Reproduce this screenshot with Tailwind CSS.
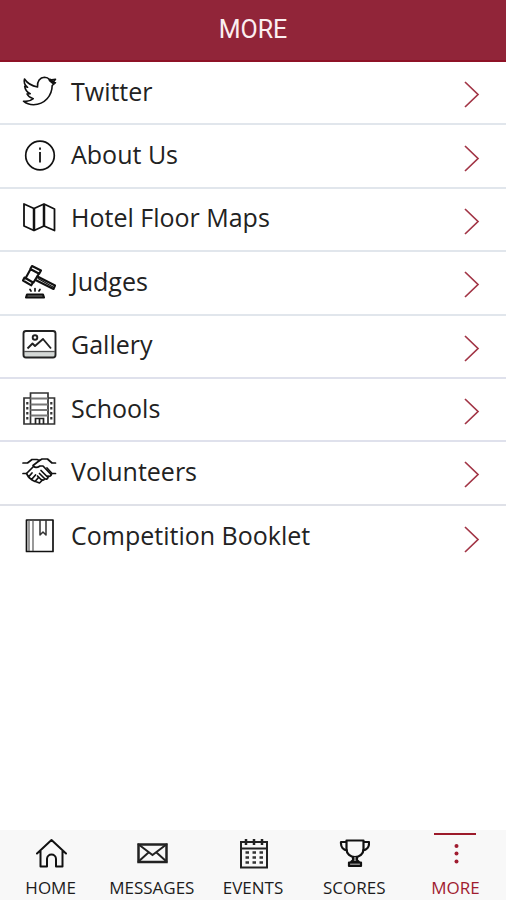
<!DOCTYPE html>
<html lang="en">
<head>
    <meta charset="UTF-8">
    <meta name="viewport" content="width=device-width, initial-scale=1.0">
    <script src="https://cdn.jsdelivr.net/npm/@tailwindcss/browser@4"></script>
    <title>More</title>
</head>
<body class="bg-white font-['Open_Sans',sans-serif] text-[#222]">

    <div class="flex min-h-screen flex-col">
        <!-- Header -->
        <header class="flex h-[62px] items-center justify-center border-b-2 border-[#8e1226] bg-[#912539]">
            <h1 class="font-['Roboto',sans-serif] text-[25px] leading-8 text-[#fbeef0]">MORE</h1>
        </header>

        <!-- Menu List -->
        <main class="flex-1">
            <ul class="grid min-h-[507px] auto-rows-fr">
                <li class="border-b-2 border-[#e1e6ec]">
                    <a href="#twitter" class="flex h-full items-center pl-[21px] pr-[26px]">
                        <svg class="mb-1 size-9 shrink-0" viewBox="0 0 36 36" fill="none" stroke="#111" stroke-width="1.6" stroke-linejoin="round" stroke-linecap="round">
                            <path d="M3.5 6c3 4.500 7.500 7 13 8C16 8 19 4.500 23.500 4.300c2.500 0 4 1 5.500 2.700l5.500-.8-2.500 3.300 2.500.2-3.300 2.800C31 22.500 24 31.500 12.500 31.800c-4 0-7-1-10-3.600 4.500.8 7-.2 9.800-2.500-3.300-.8-5-2.200-6.300-4.700l3.200-.2c-3.200-1.600-5-3.700-5.500-7.500l2.900 1C3.500 12 2.500 9.500 3.500 6z"/>
                            <path d="M29 7l3 2.500" stroke-width="3"/>
                        </svg>
                        <span class="mb-1 ml-[14px] flex-1 text-[25px] leading-8">Twitter</span>
                        <svg class="mt-1 h-[27px] w-4" viewBox="0 0 16 27" fill="none" stroke="#a23546" stroke-width="1.7"><path d="M1 1l13 12.500L1 26"/></svg>
                    </a>
                </li>
                <li class="border-b-2 border-[#e1e6ec]">
                    <a href="#about" class="flex h-full items-center pl-[21px] pr-[26px]">
                        <svg class="mb-1 size-9 shrink-0" viewBox="0 0 36 36" fill="none" stroke="#111" stroke-width="1.7">
                            <circle cx="19" cy="19.5" r="14.3"/>
                            <path d="M19 16v10.500M19 11.500v2.200" stroke-width="1.8"/>
                        </svg>
                        <span class="mb-1 ml-[14px] flex-1 text-[25px] leading-8">About Us</span>
                        <svg class="mt-1 h-[27px] w-4" viewBox="0 0 16 27" fill="none" stroke="#a23546" stroke-width="1.7"><path d="M1 1l13 12.500L1 26"/></svg>
                    </a>
                </li>
                <li class="border-b-2 border-[#e1e6ec]">
                    <a href="#maps" class="flex h-full items-center pl-[21px] pr-[26px]">
                        <svg class="mb-1 size-9 shrink-0" viewBox="0 0 36 36" fill="none" stroke="#111" stroke-width="1.8" stroke-linejoin="round">
                            <path d="M3 5l10 4.500L23 5l10.500 5v21.500L23 27l-10 4.500L3 27z"/>
                            <path d="M13 9.500v22M23 5v22" stroke-width="2.5"/>
                        </svg>
                        <span class="mb-1 ml-[14px] flex-1 text-[25px] leading-8">Hotel Floor Maps</span>
                        <svg class="mt-1 h-[27px] w-4" viewBox="0 0 16 27" fill="none" stroke="#a23546" stroke-width="1.7"><path d="M1 1l13 12.500L1 26"/></svg>
                    </a>
                </li>
                <li class="border-b-2 border-[#e1e6ec]">
                    <a href="#judges" class="flex h-full items-center pl-[21px] pr-[26px]">
                        <svg class="mb-1 size-9 shrink-0" viewBox="0 0 36 36" fill="none" stroke="#111" stroke-width="2.1" stroke-linejoin="round" stroke-linecap="round">
                            <path d="M11 3l9 4.500-1.800 3.200L9.300 6zM3.500 14.500l8.500 5-1.700 2.800L2 17.500zM9.500 6.200L4.700 15M18 10.500L12.500 19.500"/>
                            <path d="M16.500 13.500L34 22.500l-1.500 3.500L14.500 17"/>
                            <path d="M17 15.500l15 8.500" stroke-width="1.2"/>
                            <path d="M6 31.500h16l1 3H5z" fill="#777"/>
                            <path d="M9 26.500l1 1.500M14 25.500V28M19 26.500L18 28" stroke-width="1.7"/>
                        </svg>
                        <span class="mb-1 ml-[14px] flex-1 text-[25px] leading-8">Judges</span>
                        <svg class="mt-1 h-[27px] w-4" viewBox="0 0 16 27" fill="none" stroke="#a23546" stroke-width="1.7"><path d="M1 1l13 12.500L1 26"/></svg>
                    </a>
                </li>
                <li class="border-b-2 border-[#dfe1ec]">
                    <a href="#gallery" class="flex h-full items-center pl-[21px] pr-[26px]">
                        <svg class="mb-1 size-9 shrink-0" viewBox="0 0 36 36" fill="none" stroke="#222" stroke-width="1.9" stroke-linejoin="round">
                            <path d="M3 25.500h31v6H3z" fill="#d4d8d6" stroke="none"/>
                            <rect x="2.5" y="5" width="32" height="26.5" rx="2.5"/>
                            <path d="M3 25.500h31" stroke="#555" stroke-width="1.3"/>
                            <circle cx="14" cy="11.5" r="2.3"/>
                            <path d="M6.500 22.500l5-5 2.500 2.500 8-7 8 9.500"/>
                        </svg>
                        <span class="mb-1 ml-[14px] flex-1 text-[25px] leading-8">Gallery</span>
                        <svg class="mt-1 h-[27px] w-4" viewBox="0 0 16 27" fill="none" stroke="#a23546" stroke-width="1.7"><path d="M1 1l13 12.500L1 26"/></svg>
                    </a>
                </li>
                <li class="border-b-2 border-[#dfe1ec]">
                    <a href="#schools" class="flex h-full items-center pl-[21px] pr-[26px]">
                        <svg class="mb-1 size-9 shrink-0" viewBox="0 0 36 36" fill="none" stroke="#333" stroke-width="1.7">
                            <path d="M9.500 8H3v26h30.500V8H27"/>
                            <path d="M9.500 34V3h17.500v31"/>
                            <path d="M9.500 8.500H27M9.500 14.500H27M9.500 20H27M9.500 25.500H27" stroke="#777" stroke-width="2"/>
                            <path d="M6.300 12v18M30.300 12v18" stroke-width="2.2" stroke-dasharray="2.5 2.5"/>
                            <path d="M14.500 34v-5.500h8V34M18.500 29v5" stroke="#222"/>
                        </svg>
                        <span class="mb-1 ml-[14px] flex-1 text-[25px] leading-8">Schools</span>
                        <svg class="mt-1 h-[27px] w-4" viewBox="0 0 16 27" fill="none" stroke="#a23546" stroke-width="1.7"><path d="M1 1l13 12.500L1 26"/></svg>
                    </a>
                </li>
                <li class="border-b-2 border-[#dfe1e8]">
                    <a href="#volunteers" class="flex h-full items-center pl-[21px] pr-[26px]">
                        <svg class="mb-1 size-9 shrink-0" viewBox="0 0 36 36" fill="none" stroke="#111" stroke-width="1.7" stroke-linejoin="round" stroke-linecap="round">
                            <path d="M2 10h4.500l4.500-3.500h5l2.500 1 2.500-1.500h5.500L31 10h3.500"/>
                            <path d="M18.500 7.500L12 12.500c1.500 2.500 4 2.500 7 .5h3l8 8.500"/>
                            <path d="M2 20.500h3.500L12 14M34.500 20.500H31L26 15"/>
                            <path d="M5.500 20.500l2 3.500 3.500-4M8 24.500l2.500 2 4-4.500M11 27l3 1.500 3.500-4M14.500 28.500l4 1.500 3-3"/>
                            <path d="M20 17.500l7 7c-.5 2-2 2-3.500 1l-5-5M23.500 26c-.7 1.600-2.200 1.500-3.500.5l-3.500-3.500M30.500 21c-.3 2-1.800 2.800-3.500 2"/>
                        </svg>
                        <span class="mb-1 ml-[14px] flex-1 text-[25px] leading-8">Volunteers</span>
                        <svg class="mt-1 h-[27px] w-4" viewBox="0 0 16 27" fill="none" stroke="#a23546" stroke-width="1.7"><path d="M1 1l13 12.500L1 26"/></svg>
                    </a>
                </li>
                <li>
                    <a href="#booklet" class="flex h-full items-center pl-[21px] pr-[26px]">
                        <svg class="mb-1 size-9 shrink-0" viewBox="0 0 36 36" fill="none" stroke="#111" stroke-width="1.7" stroke-linejoin="round">
                            <rect x="5.500" y="3" width="26.5" height="31.5"/>
                            <path d="M8 3v31M12 3v31" stroke="#555" stroke-width="1.2"/>
                            <path d="M19 3v15l3-3 3 3V3" stroke="#333" stroke-width="1.5"/>
                        </svg>
                        <span class="mb-1 ml-[14px] flex-1 text-[25px] leading-8">Competition Booklet</span>
                        <svg class="mt-1 h-[27px] w-4" viewBox="0 0 16 27" fill="none" stroke="#a23546" stroke-width="1.7"><path d="M1 1l13 12.500L1 26"/></svg>
                    </a>
                </li>
            </ul>
        </main>

        <!-- Bottom Navigation -->
        <nav class="grid h-[70px] grid-cols-5 bg-[#f8f8f8] text-[17px] leading-5 text-[#1c1c1c]">
            <a href="#home" class="flex flex-col items-center pt-2">
                <svg class="size-8" viewBox="0 0 32 32" fill="none" stroke="#111" stroke-width="2" stroke-linejoin="round" stroke-linecap="round">
                    <path d="M2 15.500L16.500 2 31 15.500M5.500 13v15.500h6.500V21c0-6 9-6 9 0v7.500h6.500V13"/>
                </svg>
                <span class="mt-2">HOME</span>
            </a>
            <a href="#messages" class="flex flex-col items-center pt-2">
                <svg class="size-8" viewBox="0 0 32 32" fill="none" stroke="#222" stroke-width="2.5">
                    <rect x="2.500" y="6.5" width="28" height="17.5"/>
                    <path d="M2 6l14.500 11L31 6M2 24l10.500-9.500M31 24L20.500 14.500" stroke-width="2"/>
                </svg>
                <span class="mt-2">MESSAGES</span>
            </a>
            <a href="#events" class="flex flex-col items-center pt-2">
                <svg class="size-8" viewBox="0 0 32 32" fill="none" stroke="#222" stroke-width="2">
                    <rect x="4" y="4" width="26" height="25.5"/>
                    <path d="M4 10.500h26"/>
                    <path d="M9 1v6M17 1v6M25 1v6" stroke-width="2.5"/>
                    <path d="M8.500 14.500h17.500M8.500 19.500h17.500M8.500 24.500h17.500" stroke="#333" stroke-width="2.5" stroke-dasharray="3.5 3.5"/>
                </svg>
                <span class="mt-2">EVENTS</span>
            </a>
            <a href="#scores" class="flex flex-col items-center pt-2">
                <svg class="size-8" viewBox="0 0 32 32" fill="none" stroke="#111" stroke-width="2.2" stroke-linejoin="round">
                    <path d="M8.500 2.500h17V11c0 5-4 8-8.500 8s-8.500-3-8.500-8z"/>
                    <path d="M8.500 4H3c-.5 5 2.500 8 6.500 8.500M25.500 4H31c.5 5-2.500 8-6.500 8.500"/>
                    <path d="M15 19v3l-2 2h8l-2-2v-3M11 24.500h12v3.500H11z" fill="#888"/>
                </svg>
                <span class="mt-2">SCORES</span>
            </a>
            <a href="#more" aria-current="page" class="flex flex-col items-center pt-[3px] text-[#a01c30]">
                <span class="h-[2px] w-[42px] bg-[#9c1a2a]"></span>
                <svg class="mt-[3px] size-8" viewBox="0 0 32 32" fill="#a01c30">
                    <circle cx="17.500" cy="8" r="2"/>
                    <circle cx="17.500" cy="15.5" r="2"/>
                    <circle cx="17.500" cy="23.5" r="2"/>
                </svg>
                <span class="mt-2">MORE</span>
            </a>
        </nav>
    </div>

</body>
</html>
